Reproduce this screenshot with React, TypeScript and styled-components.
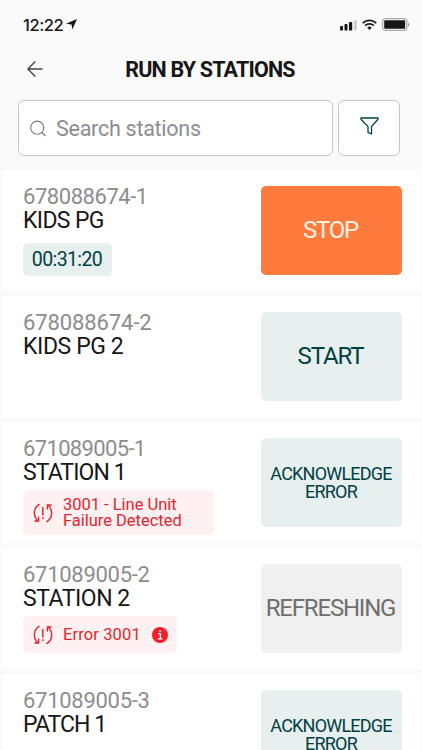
import React from "react";
import styled, { createGlobalStyle } from "styled-components";

const GlobalStyle = createGlobalStyle`
  * { box-sizing: border-box; }
  html, body { margin: 0; padding: 0; background: #fafafa; }
  body { height: 750px; overflow: hidden; font-family: Roboto, "Open Sans", sans-serif; }
  button, input { font-family: inherit; }
`;

const Screen = styled.main`
  width: 422px;
  height: 750px;
  overflow: hidden;
  background: #fafafa;
  display: flex;
  flex-direction: column;
`;

const StatusBar = styled.div`
  height: 48px;
  flex: none;
  padding: 1px 12px 0 23px;
  display: flex;
  align-items: center;
  justify-content: space-between;
`;

const Clock = styled.div`
  display: flex;
  align-items: center;
  gap: 3px;
  color: #161616;
  font: 500 16.5px/20px Inter, sans-serif;
  letter-spacing: -0.4px;
`;

const Indicators = styled.div`
  display: flex;
  align-items: center;
  gap: 5px;
`;

const Header = styled.header`
  height: 52px;
  flex: none;
  padding: 0 0 10px 27px;
  display: grid;
  grid-template-columns: 16px 1fr 45px;
  align-items: center;
`;

const BackButton = styled.button`
  display: flex;
  padding: 0;
  border: 0;
  background: none;
`;

const Title = styled.h1`
  margin: 0;
  padding-top: 1px;
  text-align: center;
  white-space: nowrap;
  color: #161616;
  font-size: 21.5px;
  line-height: 27px;
  font-weight: 700;
  letter-spacing: -0.82px;
`;

const Toolbar = styled.div`
  height: 70px;
  flex: none;
  padding: 0 22px 14px 18px;
  display: grid;
  grid-template-columns: 315px 62px;
  gap: 4.5px;
`;

const SearchBox = styled.label`
  display: flex;
  align-items: center;
  gap: 10px;
  padding-left: 11px;
  border: 1.5px solid #c6c6c6;
  border-radius: 6px;
  background: #fff;
`;

const SearchInput = styled.input`
  width: 240px;
  padding: 1px 0 0;
  border: 0;
  outline: 0;
  background: transparent;
  font-size: 21.5px;
  line-height: 28px;
  letter-spacing: -0.26px;
  color: #161616;
  &::placeholder { color: #8d8d8d; opacity: 1; }
`;

const FilterButton = styled.button`
  display: flex;
  align-items: center;
  justify-content: center;
  padding: 0 0 5px 1px;
  border: 1.5px solid #c6c6c6;
  border-radius: 6px;
  background: #fff;
`;

const StationList = styled.ul`
  margin: 0;
  padding: 0 1px 0 2px;
  list-style: none;
  display: flex;
  flex-direction: column;
  gap: 5px;
`;

const Card = styled.li`
  height: 121px;
  flex: none;
  padding: 16px 19px 0 21px;
  display: flex;
  align-items: flex-start;
  justify-content: space-between;
  background: #fff;
`;

const Details = styled.div`
  display: flex;
  flex-direction: column;
  align-items: flex-start;
`;

const Serial = styled.div<{ $spacing: number }>`
  font-size: 22px;
  line-height: 22px;
  color: #8d8d8d;
  white-space: nowrap;
  letter-spacing: ${(p) => p.$spacing}px;
`;

const Name = styled.div<{ $spacing: number }>`
  margin-top: 1px;
  font-size: 23px;
  line-height: 24px;
  color: #161616;
  white-space: nowrap;
  letter-spacing: ${(p) => p.$spacing}px;
`;

const Timer = styled.div`
  width: 89px;
  height: 33px;
  margin-top: 10px;
  border-radius: 5px;
  display: flex;
  align-items: center;
  justify-content: center;
  background: #e8efef;
  color: #004144;
  font-size: 19.5px;
  letter-spacing: -0.6px;
  padding-right: 1px;
`;

const Alert = styled.div<{ $width: number; $height: number }>`
  width: ${(p) => p.$width}px;
  height: ${(p) => p.$height}px;
  margin-top: 5px;
  padding: 1px 0 0 10px;
  border-radius: 5px;
  display: flex;
  align-items: center;
  background: #fff0f1;
  color: #e0272e;
`;

const AlertText = styled.div<{ $spacing: number }>`
  margin: 0 11px 0 10px;
  font-size: 16.5px;
  line-height: 16px;
  white-space: pre-line;
  letter-spacing: ${(p) => p.$spacing}px;
`;

type Tone = "stop" | "start" | "ack" | "busy";

const tones: Record<Tone, { bg: string; fg: string; size: number; line: number; spacing: number }> = {
  stop: { bg: "#ff7b3d", fg: "#fff3e4", size: 24, line: 26, spacing: -1.2 },
  start: { bg: "#e8efef", fg: "#004144", size: 24, line: 26, spacing: -1.1 },
  ack: { bg: "#e8efef", fg: "#004144", size: 18, line: 18, spacing: -0.8 },
  busy: { bg: "#f0f0f0", fg: "#6f6f6f", size: 24, line: 26, spacing: -1.2 },
};

const Action = styled.button<{ $tone: Tone }>`
  width: 141px;
  height: 89px;
  padding: ${(p) => (p.$tone === "ack" ? "1px 1px 0 0" : "0 2px 1px 0")};
  border: 0;
  border-radius: 5px;
  white-space: pre-line;
  background: ${(p) => tones[p.$tone].bg};
  color: ${(p) => tones[p.$tone].fg};
  font-size: ${(p) => tones[p.$tone].size}px;
  line-height: ${(p) => tones[p.$tone].line}px;
  letter-spacing: ${(p) => tones[p.$tone].spacing}px;
`;

const RetryIcon = () => (
  <svg width="20" height="20" viewBox="0 0 20 20" fill="none" stroke="currentColor" strokeWidth="1.4">
    <path d="M6.6 1.2C.2 4.6-.2 13 4.6 17.4M1.4 18h4.2v-4.4" />
    <path d="M13.4 18.8c6.4-3.4 6.8-11.8 2-16.2M18.6 2h-4.2v4.4" />
    <path d="M9.8 4v8.6M9.8 14.2V16" strokeWidth="1.5" />
  </svg>
);

const InfoIcon = () => (
  <svg width="16" height="16" viewBox="0 0 16 16">
    <circle cx="8" cy="8" r="8" fill="#fa1e28" />
    <path d="M6 6.7h2.4v5M5.8 11.8h4.6" fill="none" stroke="#fff" strokeWidth="1.3" />
    <circle cx="8" cy="4" r="1" fill="#fff" />
  </svg>
);

interface Station {
  serial: string;
  serialSpacing: number;
  name: string;
  nameSpacing: number;
  timer?: string;
  alert?: { text: string; width: number; height: number; spacing: number; info?: boolean };
  action: string;
  tone: Tone;
}

const stations: Station[] = [
  { serial: "678088674-1", serialSpacing: -0.45, name: "KIDS PG", nameSpacing: -0.65, timer: "00:31:20", action: "STOP", tone: "stop" },
  { serial: "678088674-2", serialSpacing: -0.1, name: "KIDS PG 2", nameSpacing: -0.4, action: "START", tone: "start" },
  {
    serial: "671089005-1", serialSpacing: -0.65, name: "STATION 1", nameSpacing: -0.9,
    alert: { text: "3001 - Line Unit\nFailure Detected", width: 191, height: 45, spacing: -0.02 },
    action: "ACKNOWLEDGE\nERROR", tone: "ack",
  },
  {
    serial: "671089005-2", serialSpacing: -0.28, name: "STATION 2", nameSpacing: -0.45,
    alert: { text: "Error 3001", width: 154, height: 37, spacing: 0.12, info: true },
    action: "REFRESHING", tone: "busy",
  },
  { serial: "671089005-3", serialSpacing: -0.28, name: "PATCH 1", nameSpacing: -0.95, action: "ACKNOWLEDGE\nERROR", tone: "ack" },
];

export default function App() {
  return (
    <Screen>
      <GlobalStyle />
      <StatusBar>
        <Clock>
          12:22
          <svg width="11" height="11" viewBox="0 0 11 11"><path d="M11 0 6.3 10.6 5.6 5.4 0 4.8Z" fill="#161616" /></svg>
        </Clock>
        <Indicators>
          <svg width="17" height="12" viewBox="0 0 17 12" fill="#161616">
            <rect x="0" y="7" width="3" height="4.5" rx=".8" />
            <rect x="4.5" y="5" width="3" height="6.5" rx=".8" />
            <rect x="9" y="3" width="3.2" height="8.5" rx=".8" />
            <rect x="13.8" y="1" width="3" height="10.5" rx=".8" fill="#cfcfcf" />
          </svg>
          <svg width="15" height="11" viewBox="0 0 15 11" fill="none" stroke="#161616" strokeWidth="1.9">
            <path d="M.8 4.1a9.6 9.6 0 0 1 13.4 0M3.2 6.6a6.2 6.2 0 0 1 8.6 0" />
            <path d="M5.2 8.6a3.3 3.3 0 0 1 4.6 0L7.5 11Z" fill="#161616" stroke="none" />
          </svg>
          <svg width="28" height="13" viewBox="0 0 28 13">
            <rect x=".6" y=".6" width="24.3" height="11.8" rx="3" fill="#fafafa" stroke="#aaa" strokeWidth="1.2" />
            <rect x="2.2" y="2.3" width="21" height="8.4" rx="1" fill="#161616" />
            <path d="M26 4.4c1.8.8 1.8 3.4 0 4.2Z" fill="#999" />
          </svg>
        </Indicators>
      </StatusBar>
      <Header>
        <BackButton aria-label="Back">
          <svg width="16" height="16" viewBox="0 0 16 16" fill="none" stroke="#444" strokeWidth="1.4">
            <path d="M15.5 8H1M8.3.6.9 8l7.4 7.4" />
          </svg>
        </BackButton>
        <Title>RUN BY STATIONS</Title>
      </Header>
      <Toolbar>
        <SearchBox>
          <svg width="16" height="17" viewBox="0 0 16 17" fill="none" stroke="#777" strokeWidth="1.1">
            <circle cx="7.2" cy="7.7" r="6.6" />
            <path d="m12 12.5 3.5 3.5" />
          </svg>
          <SearchInput placeholder="Search stations" />
        </SearchBox>
        <FilterButton aria-label="Filter">
          <svg width="19" height="18" viewBox="0 0 19 18" fill="none" stroke="#004144" strokeWidth="1.3" strokeLinejoin="round">
            <path d="M1 1h17v1.2L11.5 9.6V17L8 15.4V9.6L1 2.2Z" />
          </svg>
        </FilterButton>
      </Toolbar>
      <StationList>
        {stations.map((s) => (
          <Card key={s.serial}>
            <Details>
              <Serial $spacing={s.serialSpacing}>{s.serial}</Serial>
              <Name $spacing={s.nameSpacing}>{s.name}</Name>
              {s.timer && <Timer>{s.timer}</Timer>}
              {s.alert && (
                <Alert $width={s.alert.width} $height={s.alert.height}>
                  <RetryIcon />
                  <AlertText $spacing={s.alert.spacing}>{s.alert.text}</AlertText>
                  {s.alert.info && <InfoIcon />}
                </Alert>
              )}
            </Details>
            <Action $tone={s.tone}>{s.action}</Action>
          </Card>
        ))}
      </StationList>
    </Screen>
  );
}
